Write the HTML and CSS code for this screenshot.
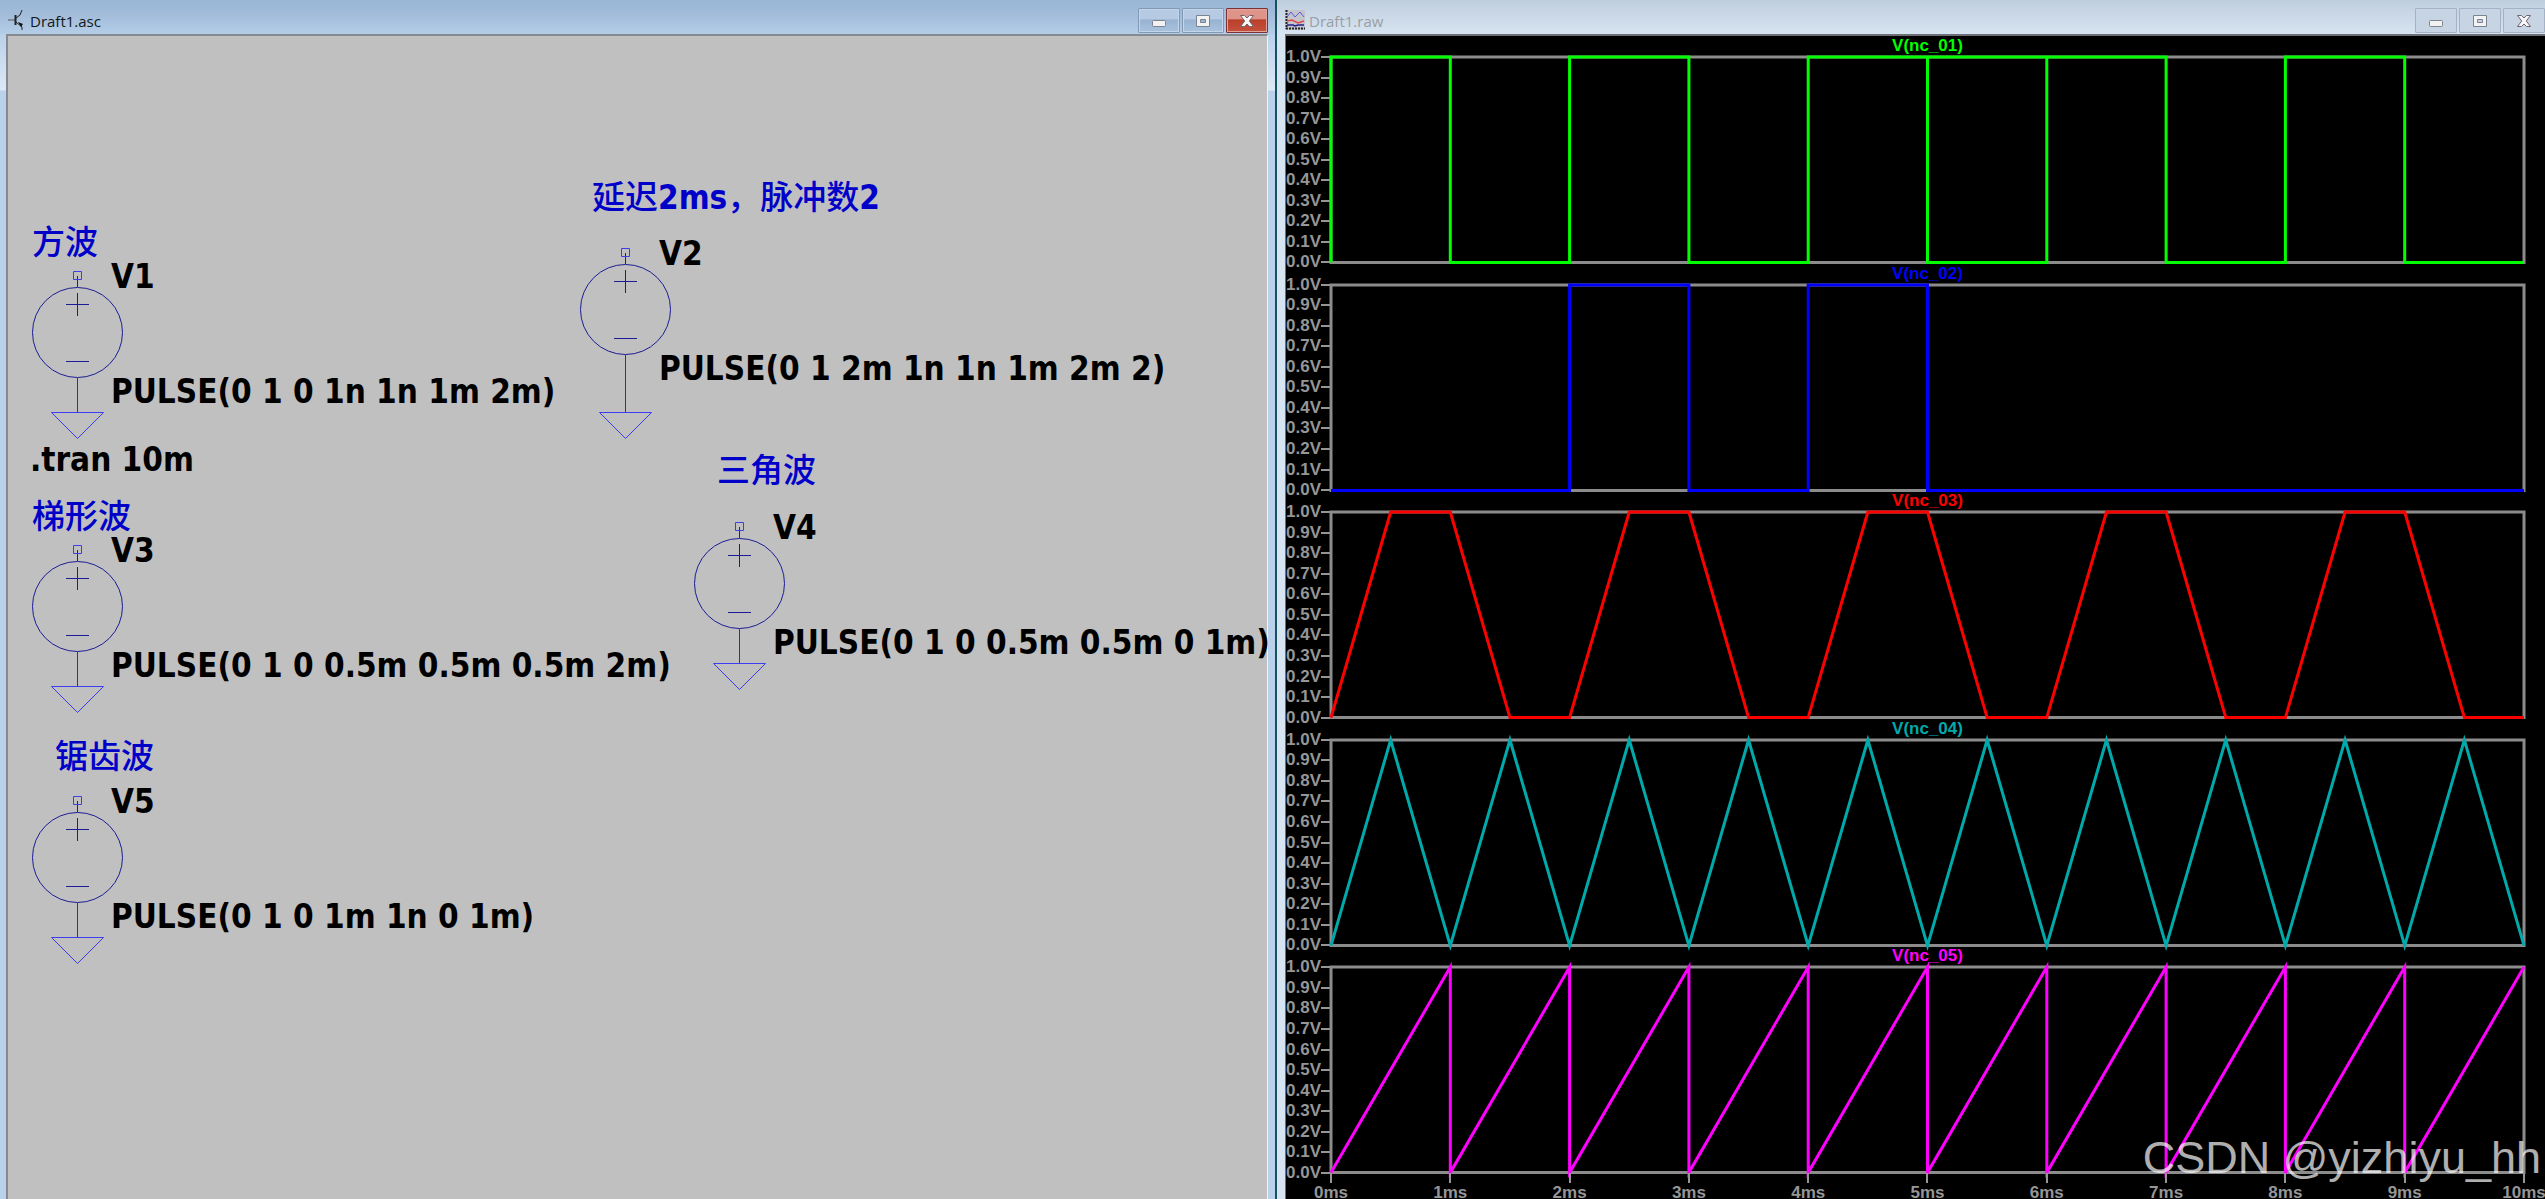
FILE: index.html
```html
<!DOCTYPE html>
<html lang="zh-CN">
<head>
<meta charset="utf-8">
<title>Draft1</title>
<link rel="stylesheet" href="styles.css">
</head>
<body>
<svg class="defs" aria-hidden="true">
  <symbol id="source" viewBox="0 0 94 170">
    <g fill="none" stroke="#1c1c96">
      <circle cx="46.5" cy="61.5" r="45"/>
      <path d="M46.500 5v11M35 33.500h23M46.500 22v23M35 90.500h23" />
    </g>
    <path d="M42.500.5h8v8h-8z" fill="none" stroke="#3c3cf0"/>
    <path d="M46.500 107v34" stroke="#2828dc"/>
    <path d="M20.500 141.500h52l-26 26z" fill="none" stroke="#3c3cf0"/>
  </symbol>
  <symbol id="source-long" viewBox="0 0 94 193">
    <g fill="none" stroke="#1c1c96">
      <circle cx="46.5" cy="61.5" r="45"/>
      <path d="M46.500 5v11M35 33.500h23M46.500 22v23M35 90.500h23" />
    </g>
    <path d="M42.500.5h8v8h-8z" fill="none" stroke="#3c3cf0"/>
    <path d="M46.500 107v57" stroke="#2828dc"/>
    <path d="M20.500 164.500h52l-26 26z" fill="none" stroke="#3c3cf0"/>
  </symbol>
  <symbol id="min" viewBox="0 0 18 14"><rect x="2.500" y="6.500" width="13" height="6" rx="1" fill="#f2f2f2" stroke="#7b8290"/></symbol>
  <symbol id="max" viewBox="0 0 18 14"><path fill="#f2f2f2" stroke="#7b8290" fill-rule="evenodd" d="M2.500 1.500h13v11h-13zM6.500 5.500h5v3h-5z"/></symbol>
  <symbol id="close" viewBox="0 0 18 14"><path fill="#f6f6f6" stroke="#6f6470" stroke-linejoin="round" d="M2.500 1.500h4L9 4l2.500-2.500h4L11.300 7l4.200 5.500h-4L9 10l-2.500 2.500h-4L6.700 7z"/></symbol>
</svg>

<main class="desktop">
  <section class="window active">
    <header class="titlebar">
      <svg class="app-icon" viewBox="0 0 20 20" fill="none" stroke="#222">
        <path d="M2 10h7" stroke="#555"/><path d="M9.500 5v10" stroke-width="2"/><path d="M10 8l4-3 2-5M10 12l6 5v3" />
        <path d="M12 12l5 2-2 3z" fill="#111" stroke="none"/>
      </svg>
      <h1 class="title">Draft1.asc</h1>
      <div class="controls">
        <button class="control" aria-label="Minimize"><svg><use href="#min"/></svg></button>
        <button class="control" aria-label="Maximize"><svg><use href="#max"/></svg></button>
        <button class="control close" aria-label="Close"><svg><use href="#close"/></svg></button>
      </div>
    </header>
    <div class="schematic">
      <p class="comment c1">方波</p>
      <p class="comment c2">延迟<b>2ms</b>，脉冲数<b>2</b></p>
      <p class="comment c3">梯形波</p>
      <p class="comment c4">三角波</p>
      <p class="comment c5">锯齿波</p>
      <p class="directive">.tran 10m</p>
      <div class="source v1"><svg><use href="#source"/></svg><span class="name">V1</span><span class="value">PULSE(0 1 0 1n 1n 1m 2m)</span></div>
      <div class="source long v2"><svg><use href="#source-long"/></svg><span class="name">V2</span><span class="value">PULSE(0 1 2m 1n 1n 1m 2m 2)</span></div>
      <div class="source v3"><svg><use href="#source"/></svg><span class="name">V3</span><span class="value">PULSE(0 1 0 0.5m 0.5m 0.5m 2m)</span></div>
      <div class="source v4"><svg><use href="#source"/></svg><span class="name">V4</span><span class="value">PULSE(0 1 0 0.5m 0.5m 0 1m)</span></div>
      <div class="source v5"><svg><use href="#source"/></svg><span class="name">V5</span><span class="value">PULSE(0 1 0 1m 1n 0 1m)</span></div>
    </div>
  </section>

  <section class="window inactive">
    <header class="titlebar">
      <svg class="app-icon" viewBox="0 0 20 20" fill="none">
        <path d="M0 0h20v20H0z" fill="#c4c4cc"/>
        <path d="M1.500 0v19M1 18.500h19" stroke="#222" stroke-width="2" stroke-dasharray="2 1"/>
        <path d="M2 7l4-5 4 5 5-5 4 5" stroke="#5a5ae0"/>
        <path d="M2 11l5-1 6 3 6-2" stroke="#e04848" stroke-width="1.500"/>
        <path d="M2 15h6l2 1 3-1h6" stroke="#202090" stroke-width="1.500"/>
      </svg>
      <h1 class="title">Draft1.raw</h1>
      <div class="controls">
        <button class="control" aria-label="Minimize"><svg><use href="#min"/></svg></button>
        <button class="control" aria-label="Maximize"><svg><use href="#max"/></svg></button>
        <button class="control" aria-label="Close"><svg><use href="#close"/></svg></button>
      </div>
    </header>
    <div class="graph">
      <section class="pane green">
        <h2>V(nc_01)</h2>
        <ol class="scale"><li>1.0V</li><li>0.9V</li><li>0.8V</li><li>0.7V</li><li>0.6V</li><li>0.5V</li><li>0.4V</li><li>0.3V</li><li>0.2V</li><li>0.1V</li><li>0.0V</li></ol>
        <svg class="plot" viewBox="0 0 1000 100" preserveAspectRatio="none"><path class="frame" d="M0 0H1000V100H0z"/><path class="trace" d="M0 100V0H100V100H200V0H300V100H400V0H500V100H600V0H700V100H800V0H900V100H1000M500 0h100"/></svg>
      </section>
      <section class="pane blue">
        <h2>V(nc_02)</h2>
        <ol class="scale"><li>1.0V</li><li>0.9V</li><li>0.8V</li><li>0.7V</li><li>0.6V</li><li>0.5V</li><li>0.4V</li><li>0.3V</li><li>0.2V</li><li>0.1V</li><li>0.0V</li></ol>
        <svg class="plot" viewBox="0 0 1000 100" preserveAspectRatio="none"><path class="frame" d="M0 0H1000V100H0z"/><path class="trace" d="M0 100H200V0H300V100H400V0H500V100H1000"/></svg>
      </section>
      <section class="pane red">
        <h2>V(nc_03)</h2>
        <ol class="scale"><li>1.0V</li><li>0.9V</li><li>0.8V</li><li>0.7V</li><li>0.6V</li><li>0.5V</li><li>0.4V</li><li>0.3V</li><li>0.2V</li><li>0.1V</li><li>0.0V</li></ol>
        <svg class="plot" viewBox="0 0 1000 100" preserveAspectRatio="none"><path class="frame" d="M0 0H1000V100H0z"/><path class="trace" d="M0 100L50 0H100L150 100H200L250 0H300L350 100H400L450 0H500L550 100H600L650 0H700L750 100H800L850 0H900L950 100H1000"/></svg>
      </section>
      <section class="pane teal">
        <h2>V(nc_04)</h2>
        <ol class="scale"><li>1.0V</li><li>0.9V</li><li>0.8V</li><li>0.7V</li><li>0.6V</li><li>0.5V</li><li>0.4V</li><li>0.3V</li><li>0.2V</li><li>0.1V</li><li>0.0V</li></ol>
        <svg class="plot" viewBox="0 0 1000 100" preserveAspectRatio="none"><path class="frame" d="M0 0H1000V100H0z"/><path class="trace" d="M0 100L50 0L100 100L150 0L200 100L250 0L300 100L350 0L400 100L450 0L500 100L550 0L600 100L650 0L700 100L750 0L800 100L850 0L900 100L950 0L1000 100"/></svg>
      </section>
      <section class="pane magenta">
        <h2>V(nc_05)</h2>
        <ol class="scale"><li>1.0V</li><li>0.9V</li><li>0.8V</li><li>0.7V</li><li>0.6V</li><li>0.5V</li><li>0.4V</li><li>0.3V</li><li>0.2V</li><li>0.1V</li><li>0.0V</li></ol>
        <svg class="plot" viewBox="0 0 1000 100" preserveAspectRatio="none"><path class="frame" d="M0 0H1000V100H0z"/><path class="trace" d="M0 100L100 0V100L200 0V100L300 0V100L400 0V100L500 0V100L600 0V100L700 0V100L800 0V100L900 0V100L1000 0"/></svg>
      </section>
      <ol class="time"><li>0ms</li><li>1ms</li><li>2ms</li><li>3ms</li><li>4ms</li><li>5ms</li><li>6ms</li><li>7ms</li><li>8ms</li><li>9ms</li><li>10ms</li></ol>
      <p class="watermark">CSDN @yizhiyu_hh</p>
    </div>
  </section>
</main>
</body>
</html>
```
FILE: styles.css
```css
* { box-sizing: border-box; margin: 0; padding: 0; }
body { background: #000; }
ol { list-style: none; }
.defs { position: absolute; width: 0; height: 0; }

.desktop {
  display: grid;
  grid-template-columns: 1277fr 1268fr;
  min-height: 100vh;
  overflow: hidden;
}
.window { display: flex; flex-direction: column; min-width: 0; }
.active {
  padding: 0 7px 0 6px;
  border-right: 2px solid #17505e;
  background:
    linear-gradient(#9ab6d6, #a3bddb 16px, #b4cee8 34px, transparent 34px),
    linear-gradient(#b9d1ea 34px, #dce9f6 90px, #b9d1ea 91px);
}
.inactive {
  padding-left: 8px;
  background: linear-gradient(#bfcedd, #d7e4f2 34px);
}

.titlebar { display: flex; height: 34px; }
.app-icon { width: 20px; height: 20px; margin-top: 10px; flex: none; }
.title {
  flex: 1;
  font: 400 15px/20px "Open Sans", "Noto Sans", sans-serif;
  color: #101820;
  padding: 11px 4px 0;
}
.inactive .title { color: #9a9ea4; }
.controls { display: flex; gap: 2px; margin-top: 8px; height: 25px; }
.control {
  width: 42px;
  border: 1px solid #8299b4;
  border-radius: 1px;
  background: linear-gradient(#b6cbe3 45%, #98b3d1 46%, #a8c2de);
  box-shadow: inset 0 0 0 1px #c2d5ea;
  display: grid;
  place-items: center;
}
.control svg { width: 18px; height: 14px; }
.inactive .control { background: #c6d4e4; border-color: #a3b2c4; box-shadow: none; }
.active .close {
  background: linear-gradient(#de9488 45%, #bb3f2a 46%, #c4523c);
  border-color: #7c3038;
  box-shadow: inset 0 0 0 1px #e0a59a;
}

.schematic {
  flex: 1;
  position: relative;
  background: #c0c0c0;
  border: 2px solid #868a90;
  border-right: 1px solid #f4f4f4;
  border-bottom: 0;
  font: 700 33px/40px "DejaVu Sans Condensed", "Noto Sans", sans-serif;
  white-space: nowrap;
}
.comment, .directive, .source { position: absolute; }
.comment { color: #0000c8; font: 500 33px/40px "Noto Sans CJK SC", sans-serif; }
.comment b { font-family: "DejaVu Sans Condensed", sans-serif; font-weight: 700; }
.c1 { left: 24px; top: 184px; }
.c2 { left: 584px; top: 139px; }
.c3 { left: 24px; top: 458px; }
.c4 { left: 709px; top: 412px; }
.c5 { left: 47px; top: 698px; }
.directive { left: 22px; top: 404px; }
.source {
  display: grid;
  grid-template-columns: 80px auto;
  grid-template-rows: 75px 40px;
  align-content: start;
  align-items: center;
  padding-top: 20px;
}
.source svg { position: absolute; left: 0; top: 0; width: 94px; height: 170px; }
.source.long svg { height: 193px; }
.name, .value { grid-column: 2; line-height: 40px; }
.name { align-self: start; margin-top: -34px; }
.value { margin-top: 12px; }
.v1 { left: 23px; top: 235px; }
.v2 { left: 571px; top: 212px; }
.v3 { left: 23px; top: 509px; }
.v4 { left: 685px; top: 486px; }
.v5 { left: 23px; top: 760px; }

.graph {
  flex: 1;
  position: relative;
  display: flex;
  flex-direction: column;
  padding-top: 1px;
  background: #000;
  box-shadow: inset 1px 2px #6c7076;
  color: #969696;
  font: 700 17px/20px "Liberation Sans", Arial, sans-serif;
}
.pane {
  flex: 1;
  display: grid;
  grid-template: 22px 1fr / 46px 1fr;
  padding-right: 21px;
  color: var(--ink);
}
.pane h2 { grid-column: 2; font: inherit; line-height: 22px; text-align: center; }
.scale {
  display: flex;
  flex-direction: column;
  justify-content: space-between;
  margin: -10px 0;
  padding-left: 1px;
  color: #969696;
}
.scale li { display: flex; justify-content: space-between; align-items: center; height: 20px; }
.scale li::after { content: ""; width: 10px; height: 2px; background: #969696; }
.plot { width: 100%; height: 100%; overflow: visible; min-height: 0; }
.plot path { fill: none; stroke-width: 3; vector-effect: non-scaling-stroke; }
.plot .frame { stroke: #8c8c8c; }
.plot .trace { stroke: currentColor; }
.green { --ink: #00ff00; }
.blue { --ink: #0000ff; }
.red { --ink: #ff0000; }
.teal { --ink: #00aaaa; }
.magenta { --ink: #ff00ff; }

.time { display: flex; justify-content: space-between; height: 26px; margin: 0 -1px 0 24px; }
.time li {
  width: 44px;
  display: flex;
  flex-direction: column;
  align-items: center;
  line-height: 20px;
}
.time li::before { content: ""; width: 2px; height: 10px; flex: none; background: #969696; }
.watermark {
  position: absolute;
  right: 4px;
  bottom: 6px;
  font: 400 45px/70px "Liberation Sans", Arial, sans-serif;
  color: rgba(255, 255, 255, .7);
}
```
